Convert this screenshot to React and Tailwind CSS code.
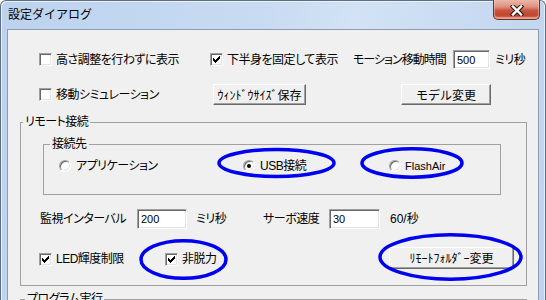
import React from 'react';

// classic (non-themed) Windows controls
function Check({ checked }) {
  return (
    <span className="w-[13px] h-[13px] shrink-0 flex items-center justify-center bg-white border border-t-[#a0a0a0] border-l-[#a0a0a0] border-r-white border-b-white shadow-[inset_1px_1px_0_#696969,inset_-1px_-1px_0_#e3e3e3]">
      {checked && (
        <svg width="7" height="7" viewBox="0 0 7 7" shapeRendering="crispEdges">
          <path d="M0 2h1v3H0zM1 3h1v3H1zM2 4h1v3H2zM3 3h1v3H3zM4 2h1v3H4zM5 1h1v3H5zM6 0h1v3H6z" fill="#000" />
        </svg>
      )}
    </span>
  );
}

function Radio({ on }) {
  return (
    <span className="w-[12px] h-[12px] shrink-0 rounded-full flex items-center justify-center bg-white border border-t-[#a0a0a0] border-l-[#a0a0a0] border-r-white border-b-white shadow-[inset_1px_1px_0_#696969,inset_-1px_-1px_0_#e3e3e3]">
      {on && <span className="w-[4px] h-[4px] rounded-full bg-black" />}
    </span>
  );
}

function Field({ className, children }) {
  return (
    <span className={`shrink-0 bg-white pl-[3px] text-[11px] leading-[16px] tracking-normal flex items-center border border-t-[#a0a0a0] border-l-[#a0a0a0] border-r-white border-b-white shadow-[inset_1px_1px_0_#696969,inset_-1px_-1px_0_#e3e3e3] ${className}`}>
      {children}
    </span>
  );
}

function Button({ className, children }) {
  return (
    <button className={`shrink-0 flex items-center justify-center bg-[#f0f0f0] leading-[14px] tracking-normal [font-family:'Noto_Sans_CJK_JP',sans-serif] [font-feature-settings:normal] border border-t-white border-l-white border-r-[#696969] border-b-[#696969] shadow-[inset_-1px_-1px_0_#a0a0a0] ${className}`}>
      {children}
    </button>
  );
}

function CloseButton() {
  return (
    <div className="-mt-[1px] w-[47px] h-[20px] shrink-0 rounded-b-[5px] border border-t-0 border-[#6e2f27] bg-[linear-gradient(#ebb7a8_0%,#df9282_35%,#c9543f_55%,#c04631_80%,#d27a64_100%)] shadow-[inset_0_-1px_0_1px_rgba(255,215,200,0.45)] flex items-center justify-center pt-[2px]">
      <svg width="14" height="11" viewBox="0 0 14 11">
        <path d="M3 1.5 L11 9.5 M11 1.5 L3 9.5" stroke="#40211b" strokeWidth="4.6" strokeLinecap="square" />
        <path d="M3 1.5 L11 9.5 M11 1.5 L3 9.5" stroke="#fff" strokeWidth="2.4" strokeLinecap="square" />
      </svg>
    </div>
  );
}

export default function App() {
  return (
    <div className="relative w-[546px] h-[300px] overflow-hidden whitespace-nowrap bg-white [font-family:'Liberation_Sans','Noto_Sans_CJK_JP',sans-serif] [font-feature-settings:'palt'] text-[12px] tracking-[-0.5px] text-black">
      <div className="flex flex-col w-full h-full rounded-t-[6px] border border-b-0 border-[#5f6f86] bg-[linear-gradient(100deg,#bcd2ee_0%,#c9dbf2_45%,#d3e2f5_60%,#bed3ee_100%)] shadow-[inset_1px_1px_0_#e8f0fb,inset_-1px_0_0_#e8f0fb]">
        {/* title bar */}
        <div className="h-[28px] shrink-0 flex items-start justify-between pl-[7px] pr-[5px]">
          <span className="mt-[6px] leading-[16px] tracking-normal [font-feature-settings:normal]">設定ダイアログ</span>
          <CloseButton />
        </div>

        {/* client area */}
        <div className="mx-[6px] h-[290px] shrink-0 border border-[#8d9cb1] bg-[#f0f0f0] pl-[12px] pt-[20px]">
          <div className="ml-[19px] h-[19px] flex items-center">
            <label className="w-[171px] shrink-0 flex items-center gap-[4px]">
              <Check />
              <span>高さ調整を行わずに表示</span>
            </label>
            <label className="w-[143px] shrink-0 flex items-center gap-[4px]">
              <Check checked />
              <span>下半身を固定して表示</span>
            </label>
            <span className="w-[100px] shrink-0 tracking-[-1px]">モーション移動時間</span>
            <Field className="w-[37px] h-[19px]">500</Field>
            <span className="ml-[5px]">ミリ秒</span>
          </div>

          <div className="ml-[19px] mt-[15px] h-[21px] flex items-center">
            <label className="w-[174px] shrink-0 flex items-center gap-[4px]">
              <Check />
              <span>移動シミュレーション</span>
            </label>
            <Button className="w-[93px] h-[21px]">ｳｨﾝﾄﾞｳｻｲｽﾞ保存</Button>
            <Button className="ml-[95px] w-[90px] h-[21px]">モデル変更</Button>
          </div>

          <fieldset className="mt-[10px] w-[507px] border border-[#a0a0a0] pb-[16px]">
            <legend className="ml-[2px] px-[2px] leading-[14px]">リモート接続</legend>

            <fieldset className="ml-[22px] mt-[8px] w-[458px] border border-[#a0a0a0] pb-[20px]">
              <legend className="ml-[6px] px-[2px] leading-[14px]">接続先</legend>
              <div className="ml-[15px] mt-[7px] h-[16px] flex items-center">
                <label className="w-[184px] shrink-0 flex items-center gap-[5px]">
                  <Radio />
                  <span>アプリケーション</span>
                </label>
                <label className="w-[146px] shrink-0 flex items-center gap-[5px]">
                  <Radio on />
                  <span>USB接続</span>
                </label>
                <label className="flex items-center gap-[4px]">
                  <Radio />
                  <span className="text-[11px] tracking-normal">FlashAir</span>
                </label>
              </div>
            </fieldset>

            <div className="ml-[19px] mt-[14px] h-[20px] flex items-center">
              <span className="w-[97px] shrink-0">監視インターバル</span>
              <Field className="w-[50px] h-[20px]">200</Field>
              <span className="ml-[9px] w-[67px] shrink-0">ミリ秒</span>
              <span className="w-[66px] shrink-0">サーボ速度</span>
              <Field className="w-[51px] h-[20px]">30</Field>
              <span className="ml-[10px] tracking-normal">60/秒</span>
            </div>

            <div className="ml-[18px] mt-[18px] h-[22px] flex items-start">
              <label className="mt-[3px] w-[126px] shrink-0 flex items-center gap-[4px]">
                <Check checked />
                <span>LED輝度制限</span>
              </label>
              <label className="mt-[3px] w-[224px] shrink-0 flex items-center gap-[4px]">
                <Check checked />
                <span>非脱力</span>
              </label>
              <Button className="w-[125px] h-[22px]">ﾘﾓｰﾄﾌｫﾙﾀﾞｰ変更</Button>
            </div>
          </fieldset>

          <fieldset className="mt-[6px] w-[507px] border border-[#a0a0a0] h-[40px]">
            <legend className="ml-[4px] px-[2px] leading-[14px]">プログラム実行</legend>
          </fieldset>
        </div>
      </div>

      {/* blue annotation marks drawn over the dialog */}
      <svg className="absolute inset-0 pointer-events-none" width="546" height="300" viewBox="0 0 546 300">
        <g fill="none" stroke="#0000f0" strokeWidth="3.5">
          <ellipse cx="276.5" cy="163" rx="57.5" ry="13.5" />
          <ellipse cx="412" cy="163" rx="50" ry="14.2" />
          <ellipse cx="183.5" cy="259.5" rx="42.5" ry="18.8" />
          <ellipse cx="450.5" cy="257" rx="70.5" ry="22.2" />
        </g>
      </svg>
    </div>
  );
}
